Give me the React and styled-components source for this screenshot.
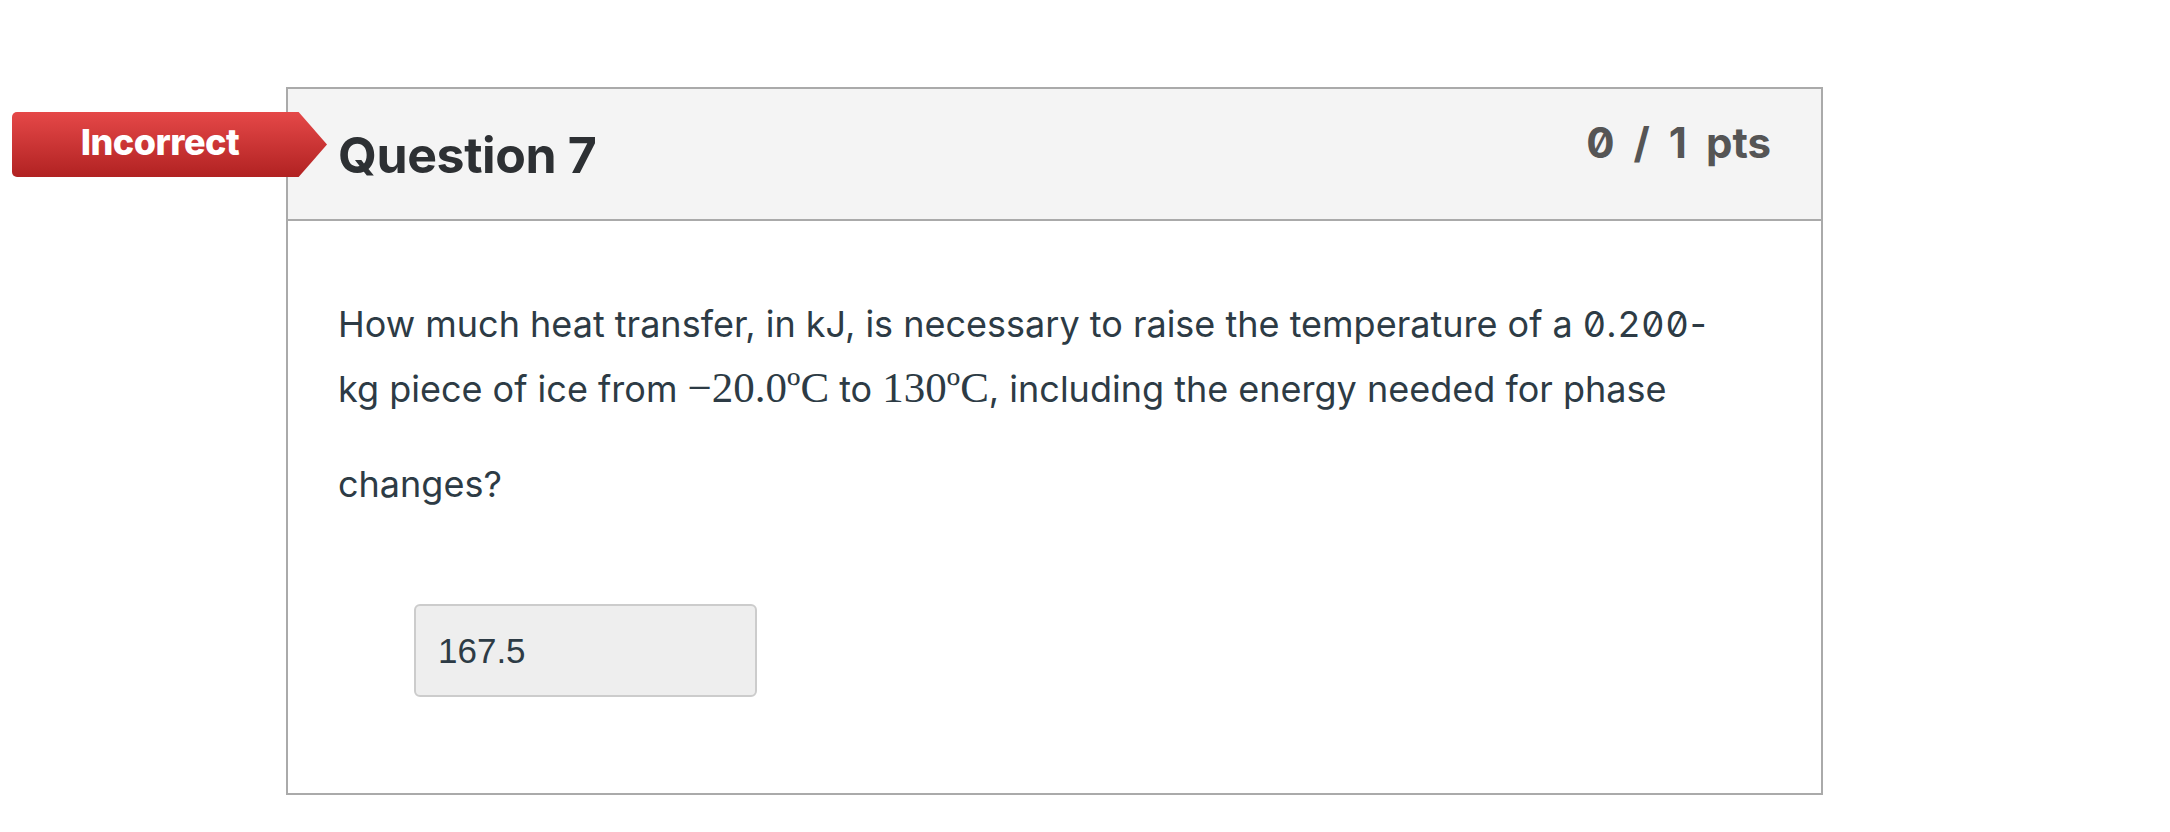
import React from "react";
import styled, { createGlobalStyle } from "styled-components";

const GlobalStyle = createGlobalStyle`
  html, body {
    margin: 0;
    padding: 0;
    background: #ffffff;
  }
  body {
    font-family: Inter, "Liberation Sans", Arial, sans-serif;
    font-feature-settings: "zero" 1;
    color: #2d3b45;
  }
`;

const Page = styled.div`
  padding: 87px 0 0 286px;
`;

const Card = styled.div`
  position: relative;
  width: 1533px;
  border: 2px solid #aaaaaa;
  background: #ffffff;
`;

const Badge = styled.div`
  position: absolute;
  left: -276px;
  top: 23px;
  width: 315px;
  height: 65px;
  display: flex;
  align-items: center;
  background: linear-gradient(#e54848, #b12222);
  clip-path: polygon(0 0, 91% 0, 100% 50%, 91% 100%, 0 100%);
  border-radius: 5px 0 0 5px;
`;

const BadgeText = styled.span`
  width: 296px;
  text-align: center;
  font-weight: 800;
  font-size: 36px;
  color: #ffffff;
  letter-spacing: -0.5px;
  margin-top: -6px;
`;

const Header = styled.div`
  height: 130px;
  background: #f4f4f4;
  border-bottom: 2px solid #aaaaaa;
  padding: 0 50px;
  display: flex;
  justify-content: space-between;
  align-items: flex-start;
`;

const Title = styled.h2`
  margin: 36px 0 0 0;
  font-weight: 700;
  font-size: 50px;
  letter-spacing: -0.4px;
  color: #2d3033;
`;

const Points = styled.div`
  margin-top: 28px;
  font-weight: 700;
  font-size: 42px;
  word-spacing: 9px;
  color: #555555;
`;

const Body = styled.div`
  padding: 72px 50px 96px 50px;
`;

const Text = styled.p`
  margin: 0;
  width: 1400px;
  font-size: 36px;
  line-height: 63px;
  color: #2d3b45;
`;

const Num = styled.span`
  letter-spacing: 1.5px;
`;

const Math = styled.span`
  display: inline-block;
  padding-bottom: 34px;
  font-family: "Liberation Serif", "Times New Roman", serif;
  font-size: 43px;
  line-height: 63px;
`;

const AnswerRow = styled.div`
  margin-top: 88px;
  padding-left: 76px;
`;

const AnswerBox = styled.div`
  width: 339px;
  height: 89px;
  background: #eeeeee;
  border: 2px solid #cccccc;
  border-radius: 6px;
  display: flex;
  align-items: center;
`;

const AnswerText = styled.span`
  padding-left: 22px;
  font-family: "Liberation Sans", Arial, sans-serif;
  font-size: 35px;
  color: #2d3b45;
`;

export default function App() {
  return (
    <>
      <GlobalStyle />
      <Page>
        <Card>
          <Badge>
            <BadgeText>Incorrect</BadgeText>
          </Badge>
          <Header>
            <Title>Question 7</Title>
            <Points>0 / 1 pts</Points>
          </Header>
          <Body>
            <Text>
              How much heat transfer, in kJ, is necessary to raise the
              temperature of a <Num>0.200-</Num>kg piece of ice from{" "}
              <Math>−20.0ºC</Math> to <Math>130ºC</Math>, including the energy
              needed for phase changes?
            </Text>
            <AnswerRow>
              <AnswerBox>
                <AnswerText>167.5</AnswerText>
              </AnswerBox>
            </AnswerRow>
          </Body>
        </Card>
      </Page>
    </>
  );
}
